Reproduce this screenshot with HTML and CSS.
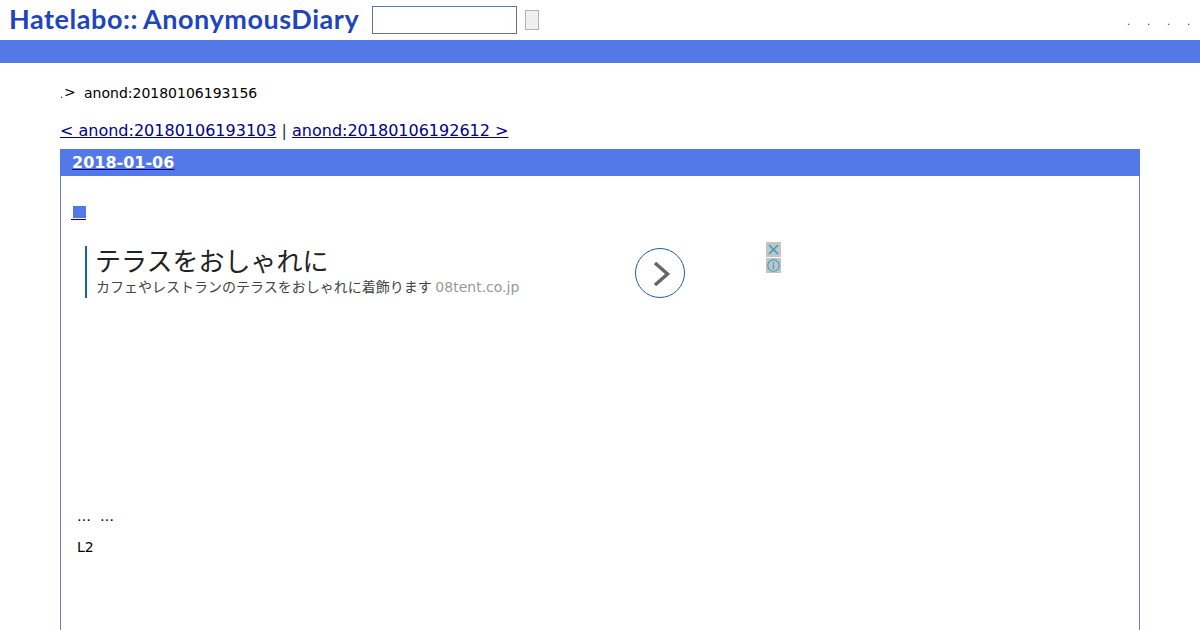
FILE: index.html
```html
<!DOCTYPE html>
<html lang="ja">
<head>
<meta charset="utf-8">
<title>anond:20180106193156</title>
<link rel="stylesheet" href="styles.css">
</head>
<body>
<header class="top">
  <a class="logo" href="#">Hatelabo<span class="logo-sep">::</span>AnonymousDiary</a>
  <form class="search">
    <input class="search-box" type="text">
    <span class="search-btn"></span>
  </form>
  <nav class="top-links"><span>.</span><span>.</span><span>.</span><span>.</span></nav>
</header>
<div class="bar"></div>
<main class="main">
  <p class="crumb"><span class="dot">.</span><span class="gt">&gt;</span><span>anond:20180106193156</span></p>
  <p class="pager"><a href="#">&lt; anond:20180106193103</a> | <a href="#">anond:20180106192612 &gt;</a></p>
  <section class="day">
    <h2 class="day-head"><a href="#">2018-01-06</a></h2>
    <div class="day-body">
      <h3 class="sect"><a href="#"><span class="square"></span></a></h3>
      <div class="ad">
        <div class="ad-text">
          <div class="ad-title">テラスをおしゃれに</div>
          <div class="ad-desc">カフェやレストランのテラスをおしゃれに着飾ります <span class="ad-domain">08tent.co.jp</span></div>
        </div>
        <div class="ad-arrow">
          <svg width="50" height="50" viewBox="0 0 50 50"><circle cx="25" cy="25" r="24.5" fill="#fff" stroke="#1a5ea8" stroke-width="1"/><path d="M20 15 L32.5 26 L20 37" fill="none" stroke="#666" stroke-width="3.5"/></svg>
        </div>
        <div class="ad-tools">
          <svg class="tool" width="15" height="15" viewBox="0 0 15 15"><path d="M3 3 L12 12 M12 3 L3 12" stroke="#2aa3c8" stroke-width="1.6" fill="none"/></svg>
          <svg class="tool" width="15" height="15" viewBox="0 0 15 15"><circle cx="7.5" cy="7.5" r="5.7" fill="none" stroke="#2aa3c8" stroke-width="1.1"/><path d="M7.5 4 V5.4 M7.5 6.5 V11" stroke="#2aa3c8" stroke-width="1.3"/></svg>
        </div>
      </div>
      <p class="line line-dots">… &nbsp;…</p>
      <p class="line line-l2">L2</p>
    </div>
  </section>
</main>
</body>
</html>
```
FILE: styles.css
```css
html, body {
  margin: 0;
  padding: 0;
  height: 630px;
  overflow: hidden;
  background: #fff;
  color: #000;
  font-family: "DejaVu Sans", sans-serif;
}
.top {
  height: 40px;
  display: flex;
  align-items: flex-start;
  box-sizing: border-box;
}
.logo {
  margin: 3px 0 0 9px;
  width: 350px;
  font-family: "Lato", sans-serif;
  font-weight: 700;
  font-size: 27px;
  line-height: 32px;
  letter-spacing: 0.55px;
  color: #1f45bd;
  text-decoration: none;
  white-space: nowrap;
}
.logo-sep { margin-right: 5px; }
.search {
  margin: 6px 0 0 13px;
  display: flex;
  align-items: flex-start;
}
.search-box {
  width: 145px;
  height: 28px;
  box-sizing: border-box;
  border: 1px solid #5a77ad;
  padding: 0;
  background: #fff;
}
.search-btn {
  display: block;
  width: 14px;
  height: 20px;
  margin: 4px 0 0 8px;
  box-sizing: border-box;
  border: 1px solid #b5b5b5;
  background: #efefef;
}
.top-links {
  margin: 16px 0 0 auto;
  padding-right: 12px;
  display: flex;
  gap: 19px;
  font-size: 10px;
  line-height: 12px;
  color: #333;
}
.top-links span { width: 1px; overflow: visible; }
.bar {
  height: 23px;
  background: #5279e7;
}
.main {
  padding: 0 60px;
}
.crumb {
  margin: 21px 0 0;
  display: flex;
  font-size: 14px;
  line-height: 18px;
}
.dot { width: 4px; font-size: 10px; line-height: 22px; }
.gt { width: 20px; line-height: 16px; }
.pager {
  margin: 15px 0 0;
  font-size: 16px;
  line-height: 20px;
  color: #333;
}
.pager a { color: #00008b; }
.day {
  margin-top: 8px;
  border: 1px solid #6f84b5;
  border-top: 0;
  height: 500px;
}
.day-head {
  margin: 0 -1px;
  padding: 0 12px;
  height: 27px;
  background: #5279e7;
  font-size: 16px;
  line-height: 28px;
  font-weight: 700;
}
.day-head a { color: #fff; text-decoration-color: #00008b; }
.day-body { padding: 0 16px 0 11px; }
.sect {
  margin: 30px 0 0;
  height: 16px;
  font-size: 16px;
  line-height: 16px;
}
.sect a {
  display: inline-block;
  margin-left: -1px;
  color: #00008b;
  border-bottom: 1px solid #00008b;
  height: 13px;
  padding: 0 0 0 2px;
}
.square {
  display: block;
  width: 13px;
  height: 12px;
  background: #5279e7;
}
.ad {
  position: relative;
  margin: 24px 0 0 13px;
  height: 52px;
  width: 600px;
  display: flex;
}
.ad-text {
  width: 550px;
  box-sizing: border-box;
  border-left: 2px solid #1a5ea8;
  padding-left: 9px;
}
.ad-title {
  margin-left: -1px;
  font-family: "Noto Sans CJK JP", sans-serif;
  font-size: 26px;
  line-height: 28px;
  color: #222;
}
.ad-desc {
  margin-top: 3px;
  font-family: "Noto Sans", "Noto Sans CJK JP", sans-serif;
  font-size: 14px;
  line-height: 20px;
  color: #444;
}
.ad-domain { font-family: "DejaVu Sans", sans-serif; color: #999; }
.ad-arrow { margin-top: 2px; height: 50px; }
.ad-tools {
  position: absolute;
  left: 681px;
  top: -4px;
  width: 15px;
  display: flex;
  flex-direction: column;
  gap: 1px;
}
.tool { display: block; background: #c4c4c4; }
.line {
  margin: 0;
  padding-left: 5px;
  font-size: 14px;
  line-height: 18px;
}
.line-dots { margin-top: 209px; }
.line-l2 { margin-top: 13px; }
```
